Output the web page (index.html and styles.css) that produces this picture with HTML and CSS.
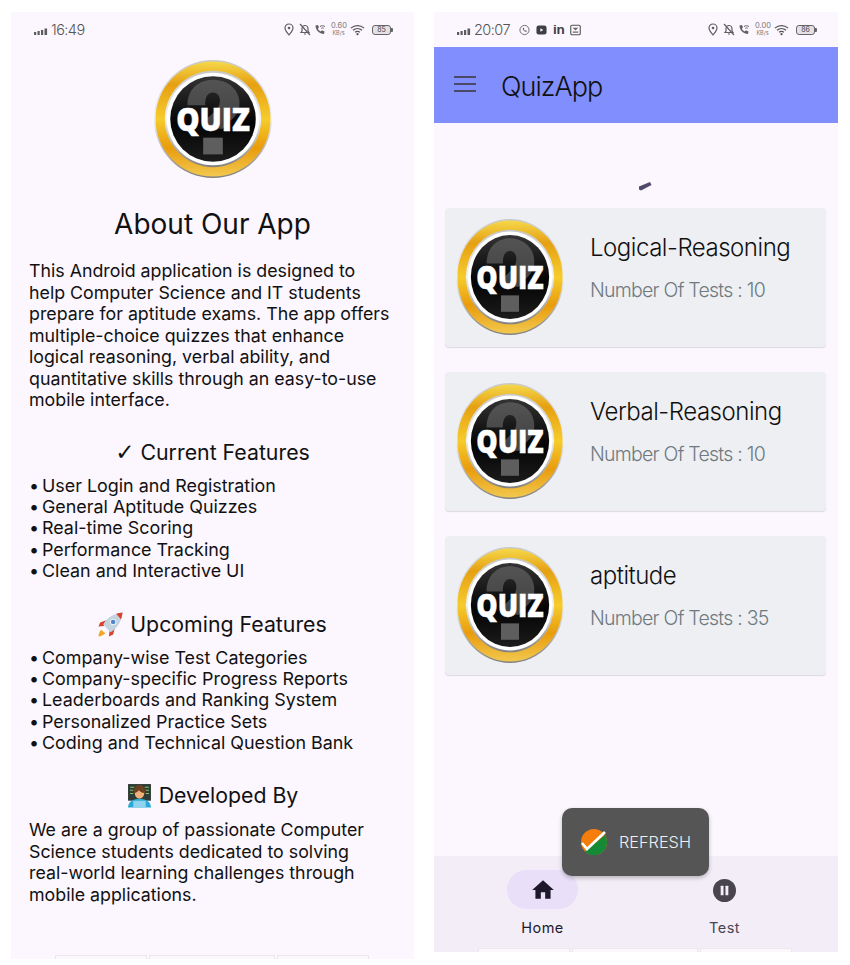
FILE: index.html
```html
<!DOCTYPE html>
<html lang="en">
<head>
<meta charset="utf-8">
<title>QuizApp</title>
<link rel="stylesheet" href="styles.css">
</head>
<body>
<svg class="defs" width="0" height="0" aria-hidden="true">
  <defs>
    <linearGradient id="gold" x1="0" y1="0" x2="0" y2="1">
      <stop offset="0" stop-color="#f5d84a"/>
      <stop offset=".2" stop-color="#e6a012"/>
      <stop offset=".5" stop-color="#f6cc2c"/>
      <stop offset=".75" stop-color="#e99c0c"/>
      <stop offset="1" stop-color="#f2c84e"/>
    </linearGradient>
    <linearGradient id="silver" x1="0" y1="0" x2="0" y2="1">
      <stop offset="0" stop-color="#c8c8c8"/>
      <stop offset=".5" stop-color="#f2f2f2"/>
      <stop offset="1" stop-color="#808080"/>
    </linearGradient>
    <linearGradient id="ball" x1="0" y1="0" x2="0" y2="1">
      <stop offset="0" stop-color="#333333"/>
      <stop offset=".55" stop-color="#040404"/>
      <stop offset="1" stop-color="#1c1c1c"/>
    </linearGradient>
    <symbol id="quiz" viewBox="0 0 120 120" preserveAspectRatio="none">
      <circle cx="60" cy="60" r="60" fill="url(#silver)"/>
      <circle cx="60" cy="60" r="58.500" fill="url(#gold)"/>
      <circle cx="60" cy="60" r="49" fill="url(#silver)"/>
      <circle cx="60" cy="60" r="47" fill="#fff"/>
      <circle cx="60" cy="60" r="43.500" fill="url(#ball)"/>
      <path d="M34 46c0-17 12-26 26-26s27 9 27 24c0 10-6 15-12 20l-5 6H51c0-7 3-11 8-15 5-4 8-8 8-14 0-5-3-8-7-8-5 0-8 4-8 13Z" fill="#6d6d6d" opacity=".6"/>
      <rect x="50" y="79" width="20" height="17" fill="#5e5e5e"/>
      <text class="quiz-text" x="60" y="72" text-anchor="middle" textLength="75" lengthAdjust="spacingAndGlyphs">QUIZ</text>
    </symbol>
    <symbol id="signal" viewBox="0 0 14 7">
      <rect x="0" y="4" width="2.200" height="3" fill="#5c5c5c"/>
      <rect x="3.500" y="3" width="2.200" height="4" fill="#5c5c5c"/>
      <rect x="7" y="2" width="2.200" height="5" fill="#5c5c5c"/>
      <rect x="10.500" y=".5" width="2.600" height="6.500" fill="#5c5c5c"/>
    </symbol>
    <symbol id="pin" viewBox="0 0 10 13">
      <path d="M5 12C3 9.500 1 7.500 1 5a4 4 0 0 1 8 0c0 2.500-2 4.500-4 7Z" fill="none" stroke="#606060" stroke-width="1.200"/>
      <circle cx="5" cy="5" r="1.300" fill="#606060"/>
    </symbol>
    <symbol id="belloff" viewBox="0 0 12 13">
      <path d="M2 9.500h8L9 8V5.500a3 3 0 0 0-6 0V8Z M5 11h2" fill="none" stroke="#606060" stroke-width="1.200"/>
      <path d="M1 1l10 11" stroke="#606060" stroke-width="1.200"/>
    </symbol>
    <symbol id="callwifi" viewBox="0 0 12 12">
      <path d="M1.500 1.500 4 1l1 2.500-1.200 1c.5 1.300 1.700 2.500 3 3l1-1.200L10.500 7.500 10 10C5.500 10 1.500 6 1.500 1.500Z" fill="#606060"/>
      <path d="M6 2.500c1.500-1 3.500-1 5 0M7.300 4.300c.8-.5 1.700-.5 2.500 0" fill="none" stroke="#606060"/>
    </symbol>
    <symbol id="wifi" viewBox="0 0 16 12">
      <path d="M1 4c4-3.500 10-3.500 14 0M3.200 6.300c2.800-2.400 6.800-2.400 9.600 0M5.400 8.500c1.500-1.200 3.700-1.200 5.200 0" fill="none" stroke="#555" stroke-width="1.400"/>
      <circle cx="8" cy="10.500" r="1.200" fill="#555"/>
    </symbol>
    <symbol id="home-icon" viewBox="0 0 24 24">
      <path d="M10 20v-6h4v6h5v-8h3L12 3 2 12h3v8z" fill="#1d192b"/>
    </symbol>
  </defs>
</svg>

<main class="screen">
  <section class="phone about">
    <header class="status">
      <div class="status-left">
        <svg class="ic-signal"><use href="#signal"/></svg>
        <span class="clock">16:49</span>
      </div>
      <div class="status-right">
        <svg class="ic-pin"><use href="#pin"/></svg>
        <svg class="ic-bell"><use href="#belloff"/></svg>
        <svg class="ic-call"><use href="#callwifi"/></svg>
        <span class="speed">0.60<br><small>KB/s</small></span>
        <svg class="ic-wifi"><use href="#wifi"/></svg>
        <span class="battery">85</span>
      </div>
    </header>

    <svg class="logo-big"><use href="#quiz"/></svg>
    <h1 class="title">About Our App</h1>
    <p class="copy first">This Android application is designed to<br>help Computer Science and IT students<br>prepare for aptitude exams. The app offers<br>multiple-choice quizzes that enhance<br>logical reasoning, verbal ability, and<br>quantitative skills through an easy-to-use<br>mobile interface.</p>

    <h2 class="head"><span class="check">✓</span> Current Features</h2>
    <ul class="list">
      <li>User Login and Registration</li>
      <li>General Aptitude Quizzes</li>
      <li>Real-time Scoring</li>
      <li>Performance Tracking</li>
      <li>Clean and Interactive UI</li>
    </ul>

    <h2 class="head">
      <svg class="emoji" viewBox="0 0 24 24" aria-hidden="true">
        <path d="M3 17c-2 2-2.500 5-2.500 6.500 2 0 5-1 6.500-3Z" fill="#f5a623"/>
        <path d="M8 8 2 10 .5 14l5-.5ZM16 16l-1.500 5.500L10.500 23.500l.5-5Z" fill="#d8402f"/>
        <path d="M5 12C8 6 15 1.500 23.500.5 23 9 18 16 12 19.500Z" fill="#c3d4de"/>
        <path d="M17.500 1.600C19.500 1 21.500.7 23.500.5c-.2 2.500-.7 4.500-1.500 6.500Z" fill="#d8402f"/>
        <circle cx="14.500" cy="9.500" r="2.600" fill="#4a86c8" stroke="#e8eef2"/>
      </svg>
      Upcoming Features
    </h2>
    <ul class="list">
      <li>Company-wise Test Categories</li>
      <li>Company-specific Progress Reports</li>
      <li>Leaderboards and Ranking System</li>
      <li>Personalized Practice Sets</li>
      <li>Coding and Technical Question Bank</li>
    </ul>

    <h2 class="head dev">
      <svg class="emoji" viewBox="0 0 24 24" aria-hidden="true">
        <rect x="1" y="1" width="22" height="16" fill="#2f3b36"/>
        <path d="M3 4h4M17 4h4M3 7h3M18 7h3M3 10h3M18 10h3" stroke="#7fc66a" stroke-width="1"/>
        <path d="M6.500 10c-.5-5 2-8 5.500-8s6 3 5.500 8Z" fill="#6a4020"/>
        <path d="M7.500 9.500c2-.5 3-1.500 4-2.500 1 1.500 3 2.500 5 2.500 0 3-2 5.500-4.500 5.500S7.500 12.500 7.500 9.500Z" fill="#f0b27a"/>
        <path d="M1 23.500c0-5 4-8.500 11-8.500s11 3.500 11 8.500Z" fill="#2aa9d6"/>
        <rect x="6" y="17" width="12" height="6.500" rx="1" fill="#8fd4ee"/>
      </svg>
      Developed By
    </h2>
    <p class="copy">We are a group of passionate Computer<br>Science students dedicated to solving<br>real-world learning challenges through<br>mobile applications.</p>

    <div class="strip">
      <span class="strip-a"></span><span class="strip-b"></span><span class="strip-c"></span>
    </div>
  </section>

  <section class="phone app">
    <header class="status">
      <div class="status-left">
        <svg class="ic-signal"><use href="#signal"/></svg>
        <span class="clock">20:07</span>
        <svg class="note first-note" viewBox="0 0 12 12" aria-hidden="true">
          <circle cx="6" cy="6" r="5" fill="none" stroke="#666"/>
          <path d="M4 3.800c0 2.200 1.800 4.200 4 4.400l.6-1.300-1.300-.6-.6.600c-.6-.3-1.100-.8-1.400-1.500l.6-.6-.6-1.300Z" fill="#666"/>
        </svg>
        <svg class="note" viewBox="0 0 12 12" aria-hidden="true">
          <rect x=".5" y="1" width="11" height="10" rx="2.500" fill="#3f3f46"/>
          <path d="M4.800 4v4l3.200-2Z" fill="#fdf7ff"/>
        </svg>
        <span class="linkedin">in</span>
        <svg class="note" viewBox="0 0 12 12" aria-hidden="true">
          <rect x=".8" y=".8" width="10.400" height="10.400" rx="1.500" fill="none" stroke="#555" stroke-width="1.200"/>
          <path d="M3 3.500h6L6 6.500Z M3 7.500h6v1.500H3Z" fill="#666"/>
        </svg>
      </div>
      <div class="status-right">
        <svg class="ic-pin"><use href="#pin"/></svg>
        <svg class="ic-bell"><use href="#belloff"/></svg>
        <svg class="ic-call"><use href="#callwifi"/></svg>
        <span class="speed">0.00<br><small>KB/s</small></span>
        <svg class="ic-wifi"><use href="#wifi"/></svg>
        <span class="battery">86</span>
      </div>
    </header>

    <div class="appbar">
      <div class="menu"><span></span><span></span><span></span></div>
      <span class="appbar-title">QuizApp</span>
    </div>

    <div class="content">
      <div class="spinner">
        <svg class="spin-mark" viewBox="0 0 14 10" aria-hidden="true">
          <path d="M1 5.500 12 1l1.500 3-10.500 5.500-2-1Z" fill="#4f4a6b"/>
        </svg>
      </div>
      <article class="card">
        <svg class="logo-card"><use href="#quiz"/></svg>
        <div class="card-text">
          <h3 class="card-title">Logical-Reasoning</h3>
          <p class="card-sub">Number Of Tests : 10</p>
        </div>
      </article>
      <article class="card">
        <svg class="logo-card"><use href="#quiz"/></svg>
        <div class="card-text">
          <h3 class="card-title">Verbal-Reasoning</h3>
          <p class="card-sub">Number Of Tests : 10</p>
        </div>
      </article>
      <article class="card">
        <svg class="logo-card"><use href="#quiz"/></svg>
        <div class="card-text">
          <h3 class="card-title">aptitude</h3>
          <p class="card-sub">Number Of Tests : 35</p>
        </div>
      </article>
    </div>

    <nav class="nav">
      <div class="nav-items">
        <div class="nav-item active">
          <span class="pill"><svg class="home"><use href="#home-icon"/></svg></span>
          <span class="nav-label">Home</span>
        </div>
        <div class="nav-item">
          <span class="pill">
            <svg class="pause" viewBox="0 0 24 24" aria-hidden="true">
              <circle cx="12" cy="12" r="12" fill="#49454f"/>
              <rect x="8" y="7" width="3" height="10" rx=".6" fill="#f3edf7"/>
              <rect x="13" y="7" width="3" height="10" rx=".6" fill="#f3edf7"/>
            </svg>
          </span>
          <span class="nav-label muted">Test</span>
        </div>
      </div>
      <div class="strip">
        <span class="strip-a"></span><span class="strip-b"></span><span class="strip-c"></span>
      </div>
    </nav>

    <div class="toast">
      <svg class="toast-icon" viewBox="0 0 26 28" aria-hidden="true">
        <circle cx="13" cy="14" r="13" fill="#f47d0c"/>
        <path d="M26 14a13 13 0 0 1-22 9.500L24 7a13 13 0 0 1 2 7Z" fill="#148a37"/>
        <path d="M1 15l5 6L24 4" fill="none" stroke="#fff" stroke-width="2.600"/>
      </svg>
      <span>REFRESH</span>
    </div>
  </section>
</main>
</body>
</html>
```

FILE: styles.css
```css
* { box-sizing: border-box; }

html, body {
  margin: 0;
  padding: 0;
  background: #ffffff;
}

body {
  font-family: Inter, "Liberation Sans", sans-serif;
  color: #111;
  height: 965px;
  overflow: hidden;
}

.defs { position: absolute; }

.quiz-text {
  font-family: "Open Sans", "Liberation Sans", sans-serif;
  font-weight: 800;
  font-size: 32px;
  fill: #fff;
  stroke: #fff;
  stroke-width: .5px;
}

.screen {
  display: flex;
  align-items: flex-start;
  gap: 20px;
  padding: 12px 12px 0 11px;
}

.phone {
  position: relative;
  display: flex;
  flex-direction: column;
  background: #fcf6fe;
}

.about {
  width: 403px;
  height: 947px;
}

.app {
  width: 404px;
  height: 940px;
}

/* status bar */
.status {
  flex: none;
  height: 35px;
  display: flex;
  align-items: center;
  justify-content: space-between;
  padding: 0 21px 0 23px;
  color: #666;
}

.status-left, .status-right {
  display: flex;
  align-items: center;
}

.ic-signal { width: 14px; height: 7px; margin-right: 3px; margin-top: 3px; }
.clock { font-size: 14.500px; font-weight: 300; letter-spacing: -.55px; color: #555; }

.ic-pin { width: 10px; height: 13px; margin-right: 5px; }
.ic-bell { width: 12px; height: 13px; margin-right: 3px; }
.ic-call { width: 12px; height: 12px; margin-right: 5px; }
.ic-wifi { width: 15px; height: 12px; margin-left: 4px; margin-right: 7px; }

.speed {
  width: 15px;
  font-size: 7.500px;
  line-height: 6.500px;
  text-align: center;
  color: #777;
}

.speed small { font-size: 5.500px; }

.battery {
  position: relative;
  width: 19px;
  height: 10px;
  margin-right: 2px;
  border: 1px solid #666;
  border-radius: 3px;
  font-size: 7px;
  line-height: 8px;
  text-align: center;
  background: #e4e0e6;
  color: #444;
}

.battery::after {
  content: "";
  position: absolute;
  right: -3px;
  top: 2px;
  width: 2px;
  height: 4px;
  border-radius: 0 1px 1px 0;
  background: #666;
}

.note { width: 11px; height: 12px; margin-left: 6px; flex: none; }
.note.first-note { margin-left: 9px; }

.linkedin {
  margin-left: 6px;
  font-family: "Liberation Sans", sans-serif;
  font-weight: 700;
  font-size: 13.500px;
  letter-spacing: -.3px;
  color: #3f3f46;
}

/* about screen */
.logo-big {
  flex: none;
  display: block;
  width: 118px;
  height: 118px;
  margin: 13px auto 0;
}

.title {
  margin: 29px 0 0;
  font-size: 28px;
  line-height: 34px;
  font-weight: 400;
  text-align: center;
  white-space: nowrap;
}

.copy {
  margin: 10px 0 0 18px;
  font-size: 17.800px;
  line-height: 21.500px;
  white-space: nowrap;
}

.copy.first { margin-top: 19px; }

.head {
  margin: 27.500px 0 0;
  display: flex;
  align-items: center;
  justify-content: center;
  gap: 7px;
  font-size: 21.300px;
  line-height: 28px;
  font-weight: 400;
  white-space: nowrap;
}

.list + .head { margin-top: 28.500px; }

.head.dev { margin-top: 27.500px; }

.check { font-family: "DejaVu Sans", sans-serif; font-weight: 700; font-size: 23px; margin-right: -1px; }

.emoji { width: 25px; height: 25px; flex: none; }

.list {
  list-style: none;
  margin: 8.500px 0 0 18px;
  padding: 0;
  font-size: 17.900px;
  line-height: 21.400px;
  white-space: nowrap;
}

.list li::before {
  content: "•";
  display: inline-block;
  width: 13px;
}

/* bottom strip */
.strip {
  flex: none;
  display: flex;
  gap: 2px;
  margin: auto 0 0 44px;
  height: 4px;
}

.strip span {
  display: block;
  height: 4px;
  border: 1px solid #ece6ee;
  border-bottom: 0;
  border-radius: 1px 1px 0 0;
  background: #fbf8fc;
}

.strip-a { width: 92px; }
.strip-b { width: 126px; }
.strip-c { width: 92px; }

/* app screen */
.appbar {
  flex: none;
  height: 76px;
  display: flex;
  align-items: center;
  background: #818ffe;
  padding-left: 20px;
}

.menu {
  width: 22px;
  display: flex;
  flex-direction: column;
  gap: 4.500px;
  margin-right: 25px;
  margin-top: -2px;
}

.menu span {
  display: block;
  height: 2.500px;
  background: #4a4a68;
}

.appbar-title {
  font-size: 27px;
  font-weight: 300;
  color: #111;
  letter-spacing: -.95px;
  padding-top: 3px;
}

.content {
  flex: 1;
  display: flex;
  flex-direction: column;
  gap: 25px;
  padding: 0 12px 0 11px;
}

.spinner {
  flex: none;
  height: 60px;
  padding: 58px 0 0 193px;
}

.spin-mark { display: block; width: 14px; height: 10px; }

.card {
  flex: none;
  height: 139px;
  display: flex;
  align-items: center;
  background: #eeeff3;
  border-radius: 4px;
  box-shadow: 0 1px 1px rgba(0, 0, 0, .12);
  padding-left: 11px;
}

.logo-card {
  flex: none;
  width: 108px;
  height: 116px;
  margin: -2px 26px 0 0;
}

.card-text {
  align-self: flex-start;
  padding-top: 25px;
}

.card-title {
  margin: 0;
  font-size: 24px;
  line-height: 30px;
  font-weight: 300;
  letter-spacing: -.47px;
  color: #111;
}

.card-sub {
  margin: 15px 0 0;
  font-size: 19.500px;
  line-height: 24px;
  font-weight: 300;
  letter-spacing: -.75px;
  color: #6f7a80;
}

/* bottom navigation */
.nav {
  flex: none;
  height: 96px;
  display: flex;
  flex-direction: column;
  background: #f3edf7;
}

.nav-items {
  display: flex;
  padding: 14px 0 0 73px;
  gap: 111px;
}

.nav-item {
  width: 71px;
  display: flex;
  flex-direction: column;
  align-items: center;
}

.pill {
  width: 71px;
  height: 39px;
  border-radius: 20px;
  display: flex;
  align-items: center;
  justify-content: center;
}

.active .pill { background: #e9dff8; }

.home { width: 26px; height: 26px; }
.pause { width: 23px; height: 23px; margin-top: 2px; }

.nav-label {
  margin-top: 10px;
  font-size: 14.500px;
  line-height: 18px;
  letter-spacing: .5px;
  color: #1d192b;
  white-space: nowrap;
}

.nav-label.muted { color: #49454f; }

.toast {
  position: absolute;
  left: 128px;
  top: 796px;
  width: 147px;
  height: 68px;
  display: flex;
  align-items: center;
  gap: 12px;
  padding-left: 19px;
  background: #555555;
  border-radius: 10px;
  box-shadow: 0 2px 4px rgba(0, 0, 0, .25);
  color: #f0f0f0;
  font-size: 16.300px;
  font-weight: 300;
}

.toast-icon { width: 26px; height: 28px; flex: none; }
```
